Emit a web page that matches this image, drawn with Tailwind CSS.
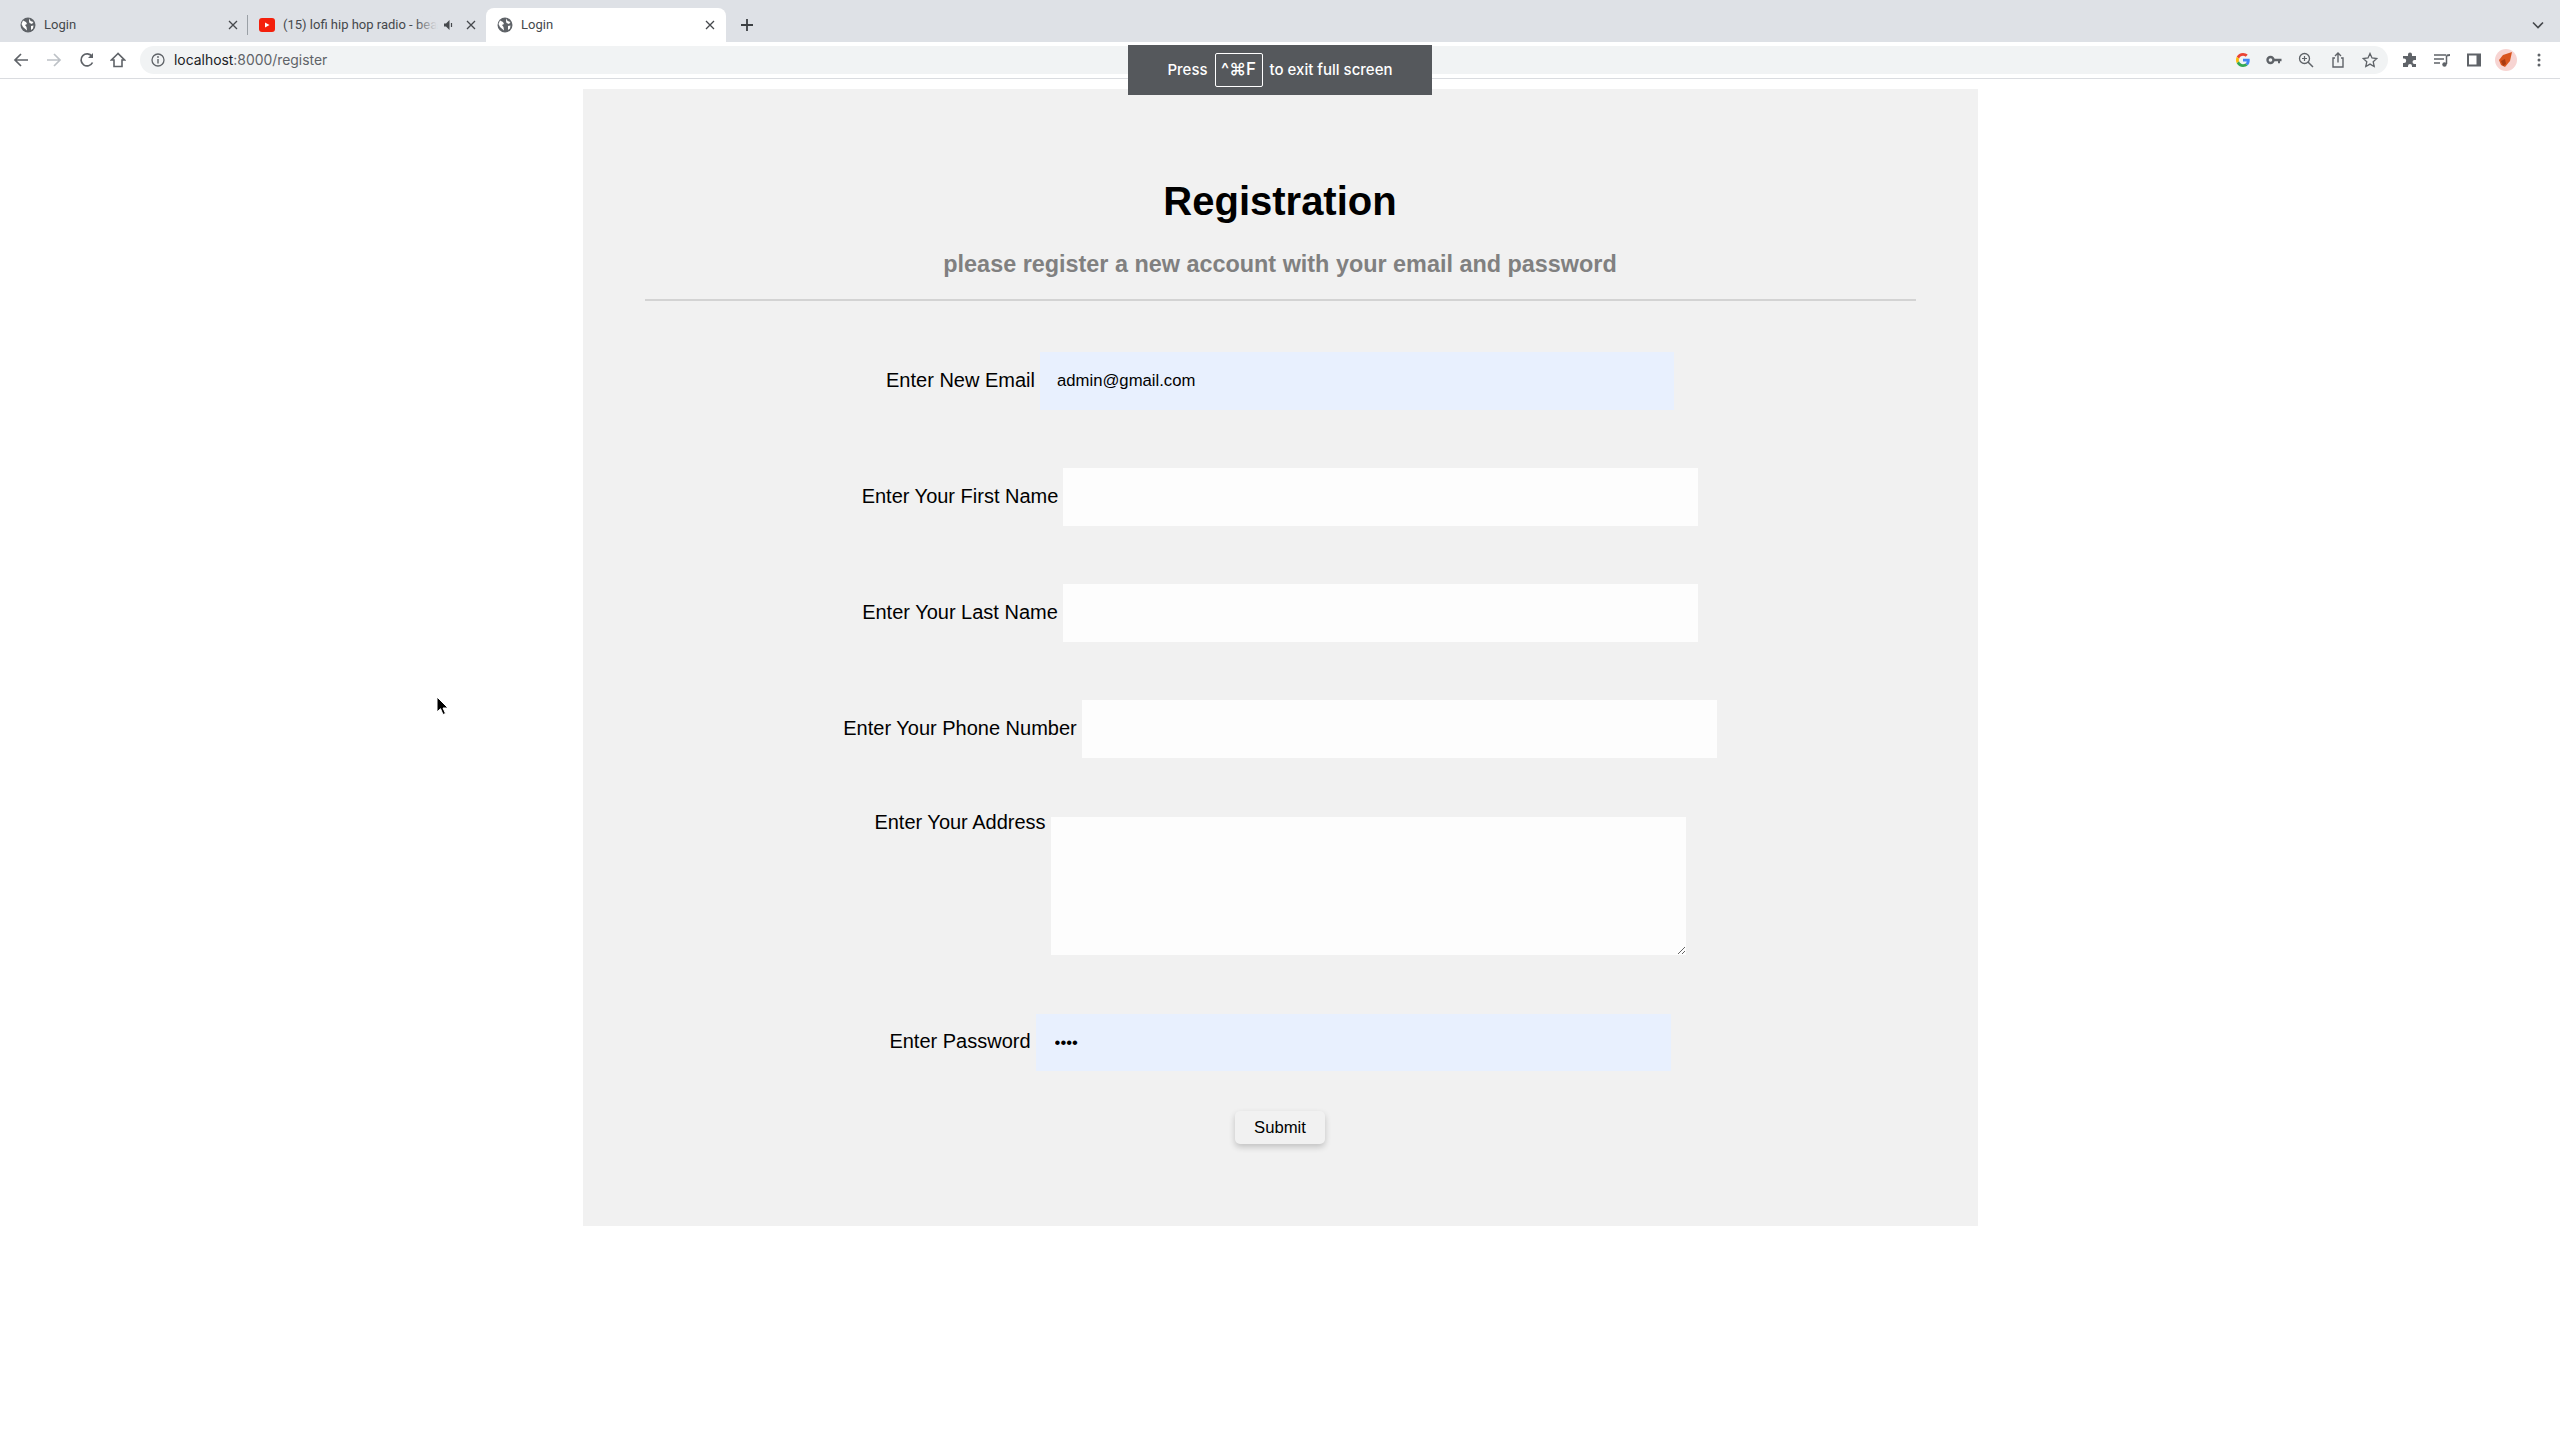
<!DOCTYPE html>
<html lang="en">
<head>
<meta charset="utf-8">
<title>Registration</title>
<script src="https://cdn.jsdelivr.net/npm/@tailwindcss/browser@4"></script>
</head>
<body class="bg-white font-['Liberation_Sans',Arial,sans-serif] text-black h-[1440px] overflow-hidden relative">

  <!-- Tab strip -->
  <div class="h-[42px] bg-[#dee1e6] flex items-end pl-2 relative font-['Roboto',sans-serif] text-[13px] text-[#45484c]">
    <div class="w-[239px] h-[34px] flex items-center pl-[12px] pr-[10px]">
      <svg class="w-4 h-4 mr-2 shrink-0" viewBox="0 0 16 16"><circle cx="8" cy="8" r="7.5" fill="#5f6368"/><path d="M3 3.500l3 1.500 1 2-2 1 1.500 2 .5 3.500L3 10 1.500 7zM9.500 1.500l1 2.500 3 1-1.500 2L9.500 6 9 4zM11 9l2.500-.5-.5 3-2 1.500z" fill="#fff"/></svg>
      <span class="flex-1">Login</span>
      <svg class="w-[10px] h-[10px] mr-[-1px]" viewBox="0 0 10 10"><path d="M1 1l8 8M9 1l-8 8" stroke="#45484c" stroke-width="1.300"/></svg>
    </div>
    <div class="w-px h-[20px] bg-[#9aa0a6] mb-[7px]"></div>
    <div class="w-[238px] h-[34px] flex items-center pl-[11px] pr-[10px]">
      <svg class="w-4 h-[14px] mr-2 shrink-0" viewBox="0 0 16 14"><rect width="16" height="14" rx="3" fill="#f4200c"/><path d="M6 4.500l4.500 2.500L6 9.500z" fill="#fff"/></svg>
      <div class="w-[154px] relative">
        <span class="whitespace-nowrap">(15) lofi hip hop radio - bea</span>
        <div class="absolute right-0 top-0 bottom-0 w-[22px] bg-linear-to-r from-[#dee1e6]/0 to-[#dee1e6]"></div>
      </div>
      <svg class="w-3 h-3 ml-[6px]" viewBox="0 0 12 12"><path d="M1 4.500h2L6.500 1v10L3 7.500H1z" fill="#45484c"/><path d="M8.500 4v4" stroke="#45484c" stroke-width="1.200"/></svg>
      <svg class="w-[10px] h-[10px] ml-[11px]" viewBox="0 0 10 10"><path d="M1 1l8 8M9 1l-8 8" stroke="#45484c" stroke-width="1.300"/></svg>
    </div>
    <div class="w-[240px] h-[34px] bg-white rounded-t-[8px] flex items-center pl-[11px] pr-[11px]">
      <svg class="w-4 h-4 mr-2 shrink-0" viewBox="0 0 16 16"><circle cx="8" cy="8" r="7.500" fill="#5f6368"/><path d="M3 3.500l3 1.500 1 2-2 1 1.500 2 .5 3.500L3 10 1.500 7zM9.500 1.500l1 2.500 3 1-1.500 2L9.500 6 9 4zM11 9l2.500-.5-.5 3-2 1.500z" fill="#fff"/></svg>
      <span class="flex-1">Login</span>
      <svg class="w-[10px] h-[10px]" viewBox="0 0 10 10"><path d="M1 1l8 8M9 1l-8 8" stroke="#45484c" stroke-width="1.300"/></svg>
    </div>
    <svg class="w-[14px] h-[14px] ml-[14px] mb-[10px]" viewBox="0 0 14 14"><path d="M7 1v12M1 7h12" stroke="#3c4043" stroke-width="1.800"/></svg>
    <svg class="absolute right-[16px] top-[21px] w-[12px] h-[8px]" viewBox="0 0 12 8"><path d="M1 1.500l5 5 5-5" fill="none" stroke="#45484c" stroke-width="1.600"/></svg>
  </div>

  <!-- Toolbar -->
  <div class="h-[37px] bg-white border-b border-[#dadce0] flex items-center pb-[1px]">
    <div class="w-[140px] shrink-0 flex items-center">
      <svg class="w-[16px] h-[16px] ml-[13px]" viewBox="0 0 16 16"><path d="M15 8H2M8 2L2 8l6 6" fill="none" stroke="#5f6368" stroke-width="1.700"/></svg>
      <svg class="w-[16px] h-[16px] ml-[17px]" viewBox="0 0 16 16"><path d="M1 8h13M8 2l6 6-6 6" fill="none" stroke="#bdc1c6" stroke-width="1.700"/></svg>
      <svg class="w-[16px] h-[16px] ml-[17px]" viewBox="0 0 16 16"><path d="M13.500 10.500A6 6 0 1 1 13 4.500" fill="none" stroke="#5f6368" stroke-width="1.700"/><path d="M14 1v5H9z" fill="#5f6368"/></svg>
      <svg class="w-[16px] h-[16px] ml-[15px]" viewBox="0 0 16 16"><path d="M8 1.500L1.500 8H4v6.500h8V8h2.500z" fill="none" stroke="#5f6368" stroke-width="1.600"/></svg>
    </div>
    <div class="w-[2248px] h-[28px] bg-[#f1f3f4] rounded-full flex items-center pl-[11px] pr-[10px] shrink-0">
      <svg class="w-[14px] h-[14px] mr-[9px]" viewBox="0 0 14 14"><circle cx="7" cy="7" r="6" fill="none" stroke="#5f6368" stroke-width="1.300"/><path d="M7 6v4.500" stroke="#5f6368" stroke-width="1.400"/><circle cx="7" cy="4" r=".9" fill="#5f6368"/></svg>
      <span class="font-['Inter',sans-serif] text-[13.900px] text-[#5f6368] flex-1 pt-[1px]"><span class="text-[#202124]">localhost</span>:8000/register</span>
      <div class="flex items-center gap-[16px]">
        <svg class="w-[14px] h-[14px]" viewBox="0 0 48 48"><path fill="#ea4335" d="M24 9.500c3.500 0 6.700 1.200 9.200 3.600l6.900-6.900C35.900 2.400 30.500 0 24 0 14.600 0 6.500 5.400 2.600 13.200l8 6.200C12.500 13.700 17.800 9.500 24 9.500z"/><path fill="#4285f4" d="M47 24.500c0-1.600-.1-3.100-.4-4.500H24v9h12.900c-.6 3-2.200 5.500-4.700 7.200l7.700 6C44.400 38 47 31.800 47 24.500z"/><path fill="#fbbc05" d="M10.500 28.600c-.5-1.500-.8-3-.8-4.600s.3-3.200.8-4.600l-8-6.200C1 16.500 0 20.100 0 24s1 7.500 2.600 10.800z"/><path fill="#34a853" d="M24 48c6.500 0 11.900-2.100 15.900-5.800l-7.700-6c-2.200 1.500-5 2.300-8.200 2.300-6.200 0-11.500-4.200-13.400-9.900l-8 6.200C6.500 42.600 14.600 48 24 48z"/></svg>
        <svg class="w-[16px] h-[16px]" viewBox="0 0 16 16"><circle cx="4.500" cy="8" r="3" fill="none" stroke="#5f6368" stroke-width="2.400"/><path d="M7 6.800h8.500v2.400h-1.500v2h-2v-2H7z" fill="#5f6368"/></svg>
        <svg class="w-[16px] h-[16px]" viewBox="0 0 16 16"><circle cx="6.500" cy="6.500" r="5" fill="none" stroke="#5f6368" stroke-width="1.300"/><path d="M10 10l5 5" stroke="#5f6368" stroke-width="1.500"/><path d="M6.500 4v5M4 6.500h5" stroke="#5f6368" stroke-width="1.200"/></svg>
        <svg class="w-[16px] h-[16px]" viewBox="0 0 16 16"><path d="M5 6H3v9h10V6h-2" fill="none" stroke="#5f6368" stroke-width="1.400"/><path d="M8 10.500V1.500M5 4l3-3 3 3" fill="none" stroke="#5f6368" stroke-width="1.400"/></svg>
        <svg class="w-[16px] h-[16px]" viewBox="0 0 16 16"><path d="M8 1.500l2 4.500 4.800.5-3.600 3.200 1 4.800L8 12.100l-4.200 2.400 1-4.800L1.200 6.500 6 6z" fill="none" stroke="#5f6368" stroke-width="1.300"/></svg>
      </div>
    </div>
    <div class="flex items-center ml-[14px] gap-[16px]">
      <svg class="w-[16px] h-[16px]" viewBox="0 0 16 16"><path d="M6 2.500a2 2 0 0 1 4 0V4h4v4h-1.500a2 2 0 0 0 0 4H14v3H10v-1a2 2 0 0 0-4 0v1H1v-4h1a2.200 2.200 0 0 0 0-4.400H1V4h5z" fill="#5f6368"/></svg>
      <svg class="w-[16px] h-[16px]" viewBox="0 0 16 16"><path d="M0 3h12M0 7h10M0 11h6" stroke="#5f6368" stroke-width="1.300"/><path d="M12.500 3.500V12" stroke="#5f6368" stroke-width="1.500"/><circle cx="10.500" cy="12.500" r="2.200" fill="#5f6368"/><path d="M12.500 2.500L16 2v2l-3.500.5z" fill="#5f6368"/></svg>
      <svg class="w-[16px] h-[16px]" viewBox="0 0 16 16"><rect x="1" y="1.500" width="14" height="13" fill="#5f6368"/><rect x="3" y="3.500" width="7.500" height="9" fill="#fff"/></svg>
      <div class="w-[22px] h-[22px] rounded-full bg-[#f7d4d2] flex items-center justify-center ml-[-3px]">
        <svg class="w-[14px] h-[16px]" viewBox="0 0 14 16"><path d="M13 0L11 9l-5 6-4-2L0 8l4-5z" fill="#d9541e"/><path d="M2 9l4-2 1 5-3 2z" fill="#a83a10"/></svg>
      </div>
      <svg class="w-[4px] h-[14px] ml-[4px]" viewBox="0 0 4 14"><circle cx="2" cy="2" r="1.500" fill="#5f6368"/><circle cx="2" cy="7" r="1.500" fill="#5f6368"/><circle cx="2" cy="12" r="1.500" fill="#5f6368"/></svg>
    </div>
  </div>

  <!-- Full screen hint -->
  <div class="absolute left-[1128px] top-[45px] w-[304px] h-[50px] bg-[#55585c] flex items-center justify-center gap-[7px] font-['Inter',sans-serif] text-[15px] font-medium text-white">
    <span>Press</span>
    <span class="w-[48px] h-[34px] border border-white rounded-[2px] flex items-center justify-center text-[17px]">^⌘F</span>
    <span>to exit full screen</span>
  </div>

  <!-- Page -->
  <main class="w-[1395px] h-[1137px] mx-auto mt-[10px] bg-[#f1f1f1] pt-[85px]">
    <h1 class="text-[40px] leading-[54px] font-bold text-center">Registration</h1>
    <p class="mt-[21px] text-[23.400px] leading-[30px] font-bold text-center text-[#808080]">please register a new account with your email and password</p>
    <hr class="mt-[20px] mx-[62px] border-0 h-[2px] bg-[#d3d3d3]">

    <form class="mt-[51px] text-[20px]">
      <div class="flex justify-center items-center gap-[5px] mb-[58px]">
        <label for="email" class="pb-[3px]">Enter New Email</label>
        <input id="email" type="email" value="admin@gmail.com" class="w-[634px] h-[58px] px-[17px] bg-[#e8f0fe] text-[16.700px] outline-none">
      </div>
      <div class="flex justify-center items-center gap-[5px] mb-[58px]">
        <label for="first" class="pb-[3px]">Enter Your First Name</label>
        <input id="first" type="text" class="w-[635px] h-[58px] px-[17px] bg-[#fdfdfd] text-[16.700px] outline-none">
      </div>
      <div class="flex justify-center items-center gap-[5px] mb-[58px]">
        <label for="last" class="pb-[3px]">Enter Your Last Name</label>
        <input id="last" type="text" class="w-[635px] h-[58px] px-[17px] bg-[#fdfdfd] text-[16.700px] outline-none">
      </div>
      <div class="flex justify-center items-center gap-[5px] mb-[59px]">
        <label for="phone" class="pb-[3px]">Enter Your Phone Number</label>
        <input id="phone" type="text" class="w-[635px] h-[58px] px-[17px] bg-[#fdfdfd] text-[16.700px] outline-none">
      </div>
      <div class="flex justify-center items-start gap-[5px] mb-[59px]">
        <label for="address" class="leading-[24px] mt-[-7px]">Enter Your Address</label>
        <textarea id="address" class="w-[635px] h-[138px] px-[17px] py-[8px] bg-[#fdfdfd] text-[16.700px] outline-none"></textarea>
      </div>
      <div class="flex justify-center items-center gap-[5px] mb-[40px]">
        <label for="password" class="pb-[3px]">Enter Password</label>
        <input id="password" type="password" value="1234" class="w-[635px] h-[57px] px-[19px] bg-[#e8f0fe] text-[16.700px] outline-none">
      </div>
      <div class="flex justify-center">
        <button type="submit" class="w-[90px] h-[33px] rounded-[5px] bg-[#f1f1f1] text-[16.700px] shadow-[0_3px_6px_rgba(0,0,0,0.2)]">Submit</button>
      </div>
    </form>
  </main>

  <!-- Mouse cursor -->
  <svg class="absolute left-[436px] top-[696px] w-[13px] h-[20px]" viewBox="0 0 13 20"><path d="M1 1v15l3.500-3.300L7 18.500l2.500-1-2.500-5.500h5z" fill="#000" stroke="#fff" stroke-width="1"/></svg>

</body>
</html>
